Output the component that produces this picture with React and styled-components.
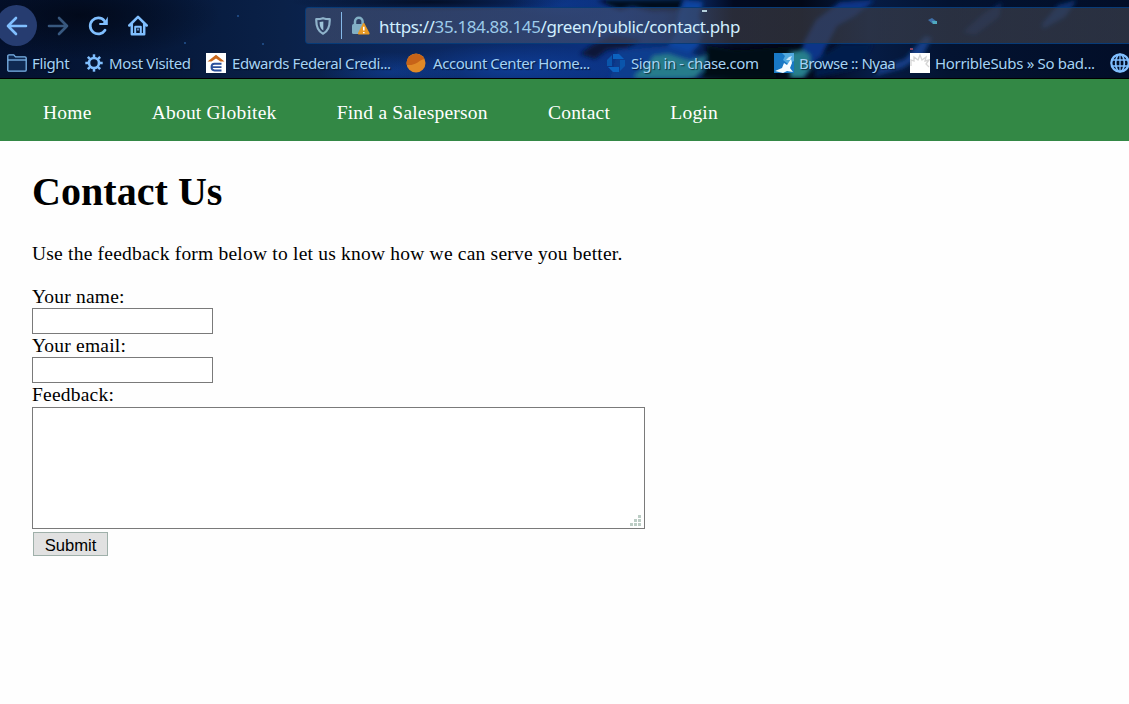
import React from "react";
import styled, { createGlobalStyle } from "styled-components";

const GlobalStyle = createGlobalStyle`
  * { box-sizing: border-box; }
  body { margin: 0; background: #fefefe; color: #000; font-family: "Liberation Serif", "Times New Roman", serif; overflow: hidden; }
`;

const Page = styled.div`
  width: 1129px;
  height: 704px;
  font-size: 19.5px;
  letter-spacing: 0.21px;
`;

const Chrome = styled.header`
  position: relative;
  height: 79px;
  overflow: hidden;
  background: #020b22;
  border-bottom: 1px solid #000;
  font-family: "Noto Sans", sans-serif;
`;

const Backdrop = styled.svg`
  position: absolute;
  inset: 0;
  width: 1129px;
  height: 78px;
`;

const Toolbar = styled.div`
  position: relative;
  display: flex;
  align-items: center;
  height: 51px;
`;

const ToolButton = styled.span`
  display: flex;
  flex: none;
  align-items: center;
  justify-content: center;
  width: 40px;
  height: 41px;
  color: #80bfff;
  opacity: ${(p) => (p.$dim ? 0.42 : 1)};
`;

const BackButton = styled(ToolButton)`
  width: 41px;
  margin: 0 1px 0 -4px;
  border-radius: 50%;
  background: #263c70;
`;

const AddressBar = styled.div`
  display: flex;
  align-items: center;
  width: 850px;
  height: 37px;
  margin: 0 0 0 147px;
  flex: none;
  border: 1px solid #073b78;
  border-radius: 3px;
  background: linear-gradient(90deg, rgba(68, 80, 112, 0.62), rgba(68, 78, 106, 0.62) 42%, rgba(60, 60, 68, 0.66) 50%, rgba(62, 66, 78, 0.66));
`;

const ShieldSlot = styled.span`
  display: flex;
  width: 36px;
  height: 27px;
  padding-left: 9px;
  align-items: center;
  border-right: 1px solid #84b8e8;
`;

const LockSlot = styled.span`
  display: flex;
  width: 37px;
  padding-left: 9px;
`;

const Url = styled.span`
  font-size: 17px;
  line-height: 26px;
  padding-top: 3px;
  letter-spacing: -0.38px;
  color: #cfeeff;
  white-space: nowrap;
`;

const Host = styled.span`
  color: #9ccbea;
`;

const Bookmarks = styled.nav`
  position: relative;
  display: flex;
  align-items: center;
  height: 24px;
  padding-left: 7px;
`;

const Bookmark = styled.span`
  display: flex;
  flex: none;
  align-items: center;
  width: ${(p) => p.$width}px;
`;

const BookmarkIcon = styled.span`
  display: flex;
  flex: none;
  width: ${(p) => p.$width}px;
`;

const BookmarkLabel = styled.span`
  font-size: 15px;
  line-height: 22px;
  padding-bottom: 1px;
  letter-spacing: ${(p) => p.$spacing}px;
  color: #a5d3f4;
  white-space: nowrap;
  text-shadow: 1px 1px 1px rgba(0, 0, 10, 0.6);
`;

const SiteNav = styled.nav`
  display: flex;
  gap: 60.2px;
  height: 62px;
  padding: 0 43px;
  align-items: center;
  background: #338845;
`;

const NavLink = styled.a`
  padding-top: 6px;
  line-height: 22px;
  color: #fff;
  white-space: nowrap;
`;

const Main = styled.main`
  padding: 28px 32px 0;
`;

const Title = styled.h1`
  margin: 0;
  font-size: 40px;
  line-height: 46px;
  letter-spacing: 0.05px;
`;

const Intro = styled.p`
  margin: 28px 0 21px;
  line-height: 22px;
`;

const Form = styled.form`
  display: flex;
  flex-direction: column;
  align-items: flex-start;
`;

const Label = styled.label`
  height: 23px;
  margin-top: ${(p) => (p.$first ? "-1px" : 0)};
  line-height: 23px;
`;

const Input = styled.input`
  width: 181px;
  height: 26px;
  padding: 2px;
  border: 1px solid #7a7a7a;
  background: #fff;
`;

const FeedbackBox = styled.div`
  position: relative;
  width: 613px;
  height: 122px;
  margin-top: 1px;
`;

const Feedback = styled.textarea`
  display: block;
  width: 100%;
  height: 100%;
  resize: none;
  border: 1px solid #7a7a7a;
  background: #fff;
`;

const Grip = styled.svg`
  position: absolute;
  right: 4px;
  bottom: 3px;
`;

const Submit = styled.button`
  width: 75px;
  height: 24px;
  margin: 3px 0 0 1px;
  padding: 3px 0 0;
  border: 1px solid #9fb0aa;
  background: #e1e1e1;
  color: #000;
  font: 16.6px/20px "Liberation Sans", Arial, sans-serif;
`;

const Nebula = () => (
  <Backdrop viewBox="0 0 1129 78" preserveAspectRatio="none">
    <defs>
      <linearGradient id="sky">
        <stop offset="0" stopColor="#041230" />
        <stop offset="0.12" stopColor="#051738" />
        <stop offset="0.25" stopColor="#0a2148" />
        <stop offset="0.4" stopColor="#0b2862" />
        <stop offset="0.55" stopColor="#0b3283" />
        <stop offset="0.62" stopColor="#082257" />
        <stop offset="0.65" stopColor="#020a20" />
        <stop offset="0.71" stopColor="#020817" />
        <stop offset="0.77" stopColor="#061c45" />
        <stop offset="0.84" stopColor="#031331" />
        <stop offset="1" stopColor="#020e28" />
      </linearGradient>
      <radialGradient id="glow">
        <stop offset="0" stopColor="#124bb5" stopOpacity="0.9" />
        <stop offset="1" stopColor="#124bb5" stopOpacity="0" />
      </radialGradient>
      <radialGradient id="shade">
        <stop offset="0" stopColor="#010612" stopOpacity="0.75" />
        <stop offset="1" stopColor="#010612" stopOpacity="0" />
      </radialGradient>
      <filter id="soft" x="-20%" y="-20%" width="140%" height="140%">
        <feGaussianBlur stdDeviation="2" />
      </filter>
    </defs>
    <rect width="1129" height="78" fill="url(#sky)" />
    <ellipse cx="80" cy="15" rx="140" ry="45" fill="url(#shade)" />
    <ellipse cx="430" cy="2" rx="140" ry="10" fill="url(#shade)" />
    <ellipse cx="390" cy="72" rx="70" ry="20" fill="url(#glow)" opacity="0.5" />
    <ellipse cx="510" cy="68" rx="120" ry="24" fill="url(#glow)" opacity="0.6" />
    <ellipse cx="560" cy="4" rx="50" ry="14" fill="url(#glow)" opacity="0.3" />
    <g filter="url(#soft)">
      <path d="M580 54l12-9 20-10 30 5-15 8-20 2-12 9z" fill="#071738" />
      <path d="M597 0h90l-7 10-28 1-20-5-12 4z" fill="#020a1e" />
      <path d="M684 0l19 2-4 15 5 10-6 20-13 10-22-4 12-18 3-20z" fill="#1044a0" />
      <path d="M618 51l50-5 30 9-8 25h-80z" fill="#103c8e" />
      <path d="M635 75l14-11 4-8 15-2 22 7 16-6-3 15-8 8h-60z" fill="#257b8b" />
      <path d="M706 45l30 5 56-4-14 14-2 18h-74l6-16z" fill="#020712" />
      <path d="M804 42l12-22 24-18 35-2-20 16-18 10-15 29-18 23h-12z" fill="#0b3488" />
      <path d="M790 52l12-2 8 5 0 14-7 9h-13z" fill="#267f8b" />
      <path d="M880 68l25-9 20-23 7 2-9 17-20 13-29 8z" fill="#133d86" />
      <path d="M963 32l20-18 19-12-3 15-24 18z" fill="#0f285a" />
      <path d="M1042 24l16-19 19-5-12 17-22 12z" fill="#0d3071" />
      <path d="M815 60l28-17 30 1-14 24-44 10z" fill="#061c4c" />
    </g>
    <path d="M910 48h3v2h-3z" fill="#8c4560" />
    <g fill="#245592"><circle cx="238" cy="16" r="1" /><circle cx="185" cy="43" r="1" /><circle cx="263" cy="44" r="1" /></g>
  </Backdrop>
);

const Stars = () => (
  <Backdrop viewBox="0 0 1129 78">
    <path d="M702 10h5v2h-5z" fill="#b4d0dc" />
    <path d="M928 20l4-2 4 3-3 3z" fill="#3f6fa8" />
    <path d="M932 21h5v3h-4z" fill="#4fa9bf" />
  </Backdrop>
);

const Arrow = ({ flip }) => (
  <svg width="22" height="20" viewBox="0 0 22 20" fill="none" stroke="currentColor" strokeWidth="2.6" strokeLinecap="round" strokeLinejoin="round">
    <path d={flip ? "M2 10h18M12 2l8 8-8 8" : "M20 10H2M10 2L2 10l8 8"} />
  </svg>
);

const Reload = () => (
  <svg width="20" height="20" viewBox="0 0 20 20">
    <path d="M17 14.200a8 8 0 1 1-.7-9.500" fill="none" stroke="currentColor" strokeWidth="2.800" strokeLinecap="round" />
    <path d="M19.800 0.500v8.500h-8.500v-2h3.500l3-3z" fill="currentColor" />
  </svg>
);

const House = () => (
  <svg width="20" height="21" viewBox="0 0 20 21" fill="none" stroke="currentColor" strokeWidth="2.5" strokeLinecap="round" strokeLinejoin="round">
    <path d="M1.300 10.500L10 1.800l8.700 8.700M3.800 9v10.200h12.400V9" />
    <path d="M7.200 19v-7.300h5.600V19" strokeWidth="2" />
    <path d="M10 14v1" strokeWidth="1.400" />
  </svg>
);

const Shield = () => (
  <svg width="16" height="18" viewBox="0 0 16 18">
    <path d="M8 1.200c2 .7 4.200 .9 6.700 .9C15 9 13.500 14 8 16.700 2.500 14 1 9 1.300 2.100 3.800 2.100 6 1.900 8 1.200z" fill="none" stroke="#8fb3cb" strokeWidth="2.200" strokeLinejoin="round" />
    <path d="M8.300 4.500v9C5.300 11.500 4.700 9 4.600 5z" fill="#9dc3d8" />
  </svg>
);

const WarningLock = () => (
  <svg width="19" height="20" viewBox="0 0 19 20">
    <path d="M4 9V5.500a3.800 3.800 0 0 1 7.600 0V9" fill="none" stroke="#82afc5" strokeWidth="2.500" />
    <rect x="1" y="8" width="13" height="10" rx="1.500" fill="#82afc5" />
    <path d="M12 7.500a1 1 0 0 1 1.500 0l5 9.500c.3.800-.2 1.500-1 1.500H8c-.8 0-1.300-.7-1-1.500z" fill="#e99923" />
    <path d="M12.800 10.800v3.700M12.800 16v1.200" stroke="#fff" strokeWidth="1.600" />
  </svg>
);

const Folder = () => (
  <svg width="20" height="18" viewBox="0 0 20 18" fill="#0f2952" stroke="#7cb5ea" strokeWidth="1.300" strokeLinejoin="round">
    <path d="M.8 2A1.200 1.200 0 0 1 2 .8h4.800l1.700 2H18a1.200 1.200 0 0 1 1.200 1.200v12a1.200 1.200 0 0 1-1.200 1.200H2A1.200 1.200 0 0 1 .8 16z" />
    <path d="M1 6h18" />
  </svg>
);

const Gear = () => (
  <svg width="18" height="18" viewBox="0 0 18 18" fill="none" stroke="#80bfff">
    <circle cx="9" cy="9" r="5" strokeWidth="2.600" />
    {[0, 45, 90, 135, 180, 225, 270, 315].map((a) => (
      <path key={a} d="M9 3.500V.3" strokeWidth="2.500" transform={`rotate(${a} 9 9)`} />
    ))}
  </svg>
);

const CreditUnion = () => (
  <svg width="20" height="20" viewBox="0 0 20 20">
    <path fill="#fff" d="M0 0h20v20H0z" />
    <path d="M1.500 8.500L10 1.800l8.500 6.700h-4L10 5.500l-4.500 3z" fill="#c9681d" />
    <path d="M15.500 10.700H8.500c-4 0-4 6.800 0 6.800h7M5.500 14.100h10" fill="none" stroke="#294f9b" strokeWidth="1.900" />
  </svg>
);

const OrangeDisc = () => (
  <svg width="20" height="20" viewBox="0 0 20 20">
    <circle cx="10" cy="10" r="9.500" fill="#e18a27" />
    <path d="M.7 12A9.500 9.500 0 0 1 18.500 6C13 7 10 13 .7 12z" fill="#c76318" />
  </svg>
);

const Octagon = () => (
  <svg width="18" height="18" viewBox="0 0 18 18" fill="#0c62bf">
    <path d="M6 0h6l5 5H6z" />
    <path d="M18 6v6l-5 5V6z" fill="#0a55ab" />
    <path d="M12 18H6l-5-5h11z" />
    <path d="M0 12V6l5-5v11z" fill="#0a55ab" />
  </svg>
);

const Wave = () => (
  <svg width="20" height="20" viewBox="0 0 20 20">
    <path fill="#1878c5" d="M0 0h20v20H0z" />
    <path d="M8 0h12v8l-6 3-5-4 2-4z" fill="#51a9df" />
    <path d="M1 18l7-3 2-5 3 2 4-6 1 4-2 5 3 4-6-1-4 2z" fill="#f4fbff" />
    <path d="M12 7l3-3 3-1-2 4z" fill="#c9e7f8" />
  </svg>
);

const Burst = () => (
  <svg width="20" height="20" viewBox="0 0 20 20">
    <path fill="#fff" d="M0 0h20v20H0z" />
    <path d="M1 13V7l3 1V4l4 3 2-5 2 5 4-3-1 4 4-1-3 4 3 3" fill="none" stroke="#d5d5d5" strokeWidth="1.300" />
  </svg>
);

const Globe = () => (
  <svg width="20" height="20" viewBox="0 0 20 20" fill="none" stroke="#80bfff" strokeWidth="1.700">
    <circle cx="10" cy="10" r="8.700" strokeWidth="2.200" />
    <ellipse cx="10" cy="10" rx="4.300" ry="8.700" />
    <path d="M10 1v18M2 7h16M2 13h16" strokeWidth="1.300" />
  </svg>
);

const bookmarks = [
  { label: "Flight", icon: Folder, slot: 25, width: 78, spacing: -0.35 },
  { label: "Most Visited", icon: Gear, slot: 24, width: 121, spacing: -0.38 },
  { label: "Edwards Federal Credi...", icon: CreditUnion, slot: 26, width: 200, spacing: -0.43 },
  { label: "Account Center Home...", icon: OrangeDisc, slot: 27, width: 201, spacing: -0.45 },
  { label: "Sign in - chase.com", icon: Octagon, slot: 24, width: 167, spacing: -0.4 },
  { label: "Browse :: Nyaa", icon: Wave, slot: 25, width: 136, spacing: -0.53 },
  { label: "HorribleSubs » So bad...", icon: Burst, slot: 25, width: 200, spacing: -0.32 },
  { label: "", icon: Globe, slot: 20, width: 20, spacing: 0 },
];

const links = ["Home", "About Globitek", "Find a Salesperson", "Contact", "Login"];

export default function App() {
  return (
    <Page>
      <GlobalStyle />
      <Chrome>
        <Nebula />
        <Toolbar>
          <BackButton><Arrow /></BackButton>
          <ToolButton $dim><Arrow flip /></ToolButton>
          <ToolButton><Reload /></ToolButton>
          <ToolButton><House /></ToolButton>
          <AddressBar>
            <ShieldSlot><Shield /></ShieldSlot>
            <LockSlot><WarningLock /></LockSlot>
            <Url>https://<Host>35.184.88.145</Host>/green/public/contact.php</Url>
          </AddressBar>
        </Toolbar>
        <Stars />
        <Bookmarks>
          {bookmarks.map(({ label, icon: Icon, slot, width, spacing }, i) => (
            <Bookmark key={i} $width={width}>
              <BookmarkIcon $width={slot}><Icon /></BookmarkIcon>
              {label && <BookmarkLabel $spacing={spacing}>{label}</BookmarkLabel>}
            </Bookmark>
          ))}
        </Bookmarks>
      </Chrome>
      <SiteNav>
        {links.map((l) => <NavLink key={l}>{l}</NavLink>)}
      </SiteNav>
      <Main>
        <Title>Contact Us</Title>
        <Intro>Use the feedback form below to let us know how we can serve you better.</Intro>
        <Form>
          <Label $first htmlFor="name">Your name:</Label>
          <Input id="name" />
          <Label htmlFor="email">Your email:</Label>
          <Input id="email" />
          <Label htmlFor="feedback">Feedback:</Label>
          <FeedbackBox>
            <Feedback id="feedback" />
            <Grip width="11" height="11" viewBox="0 0 11 11" fill="#bccdc5">
              <path d="M8 0h3v3H8zM4 4h3v3H4zM8 4h3v3H8zM0 8h3v3H0zM4 8h3v3H4zM8 8h3v3H8z" />
            </Grip>
          </FeedbackBox>
          <Submit type="button">Submit</Submit>
        </Form>
      </Main>
    </Page>
  );
}
